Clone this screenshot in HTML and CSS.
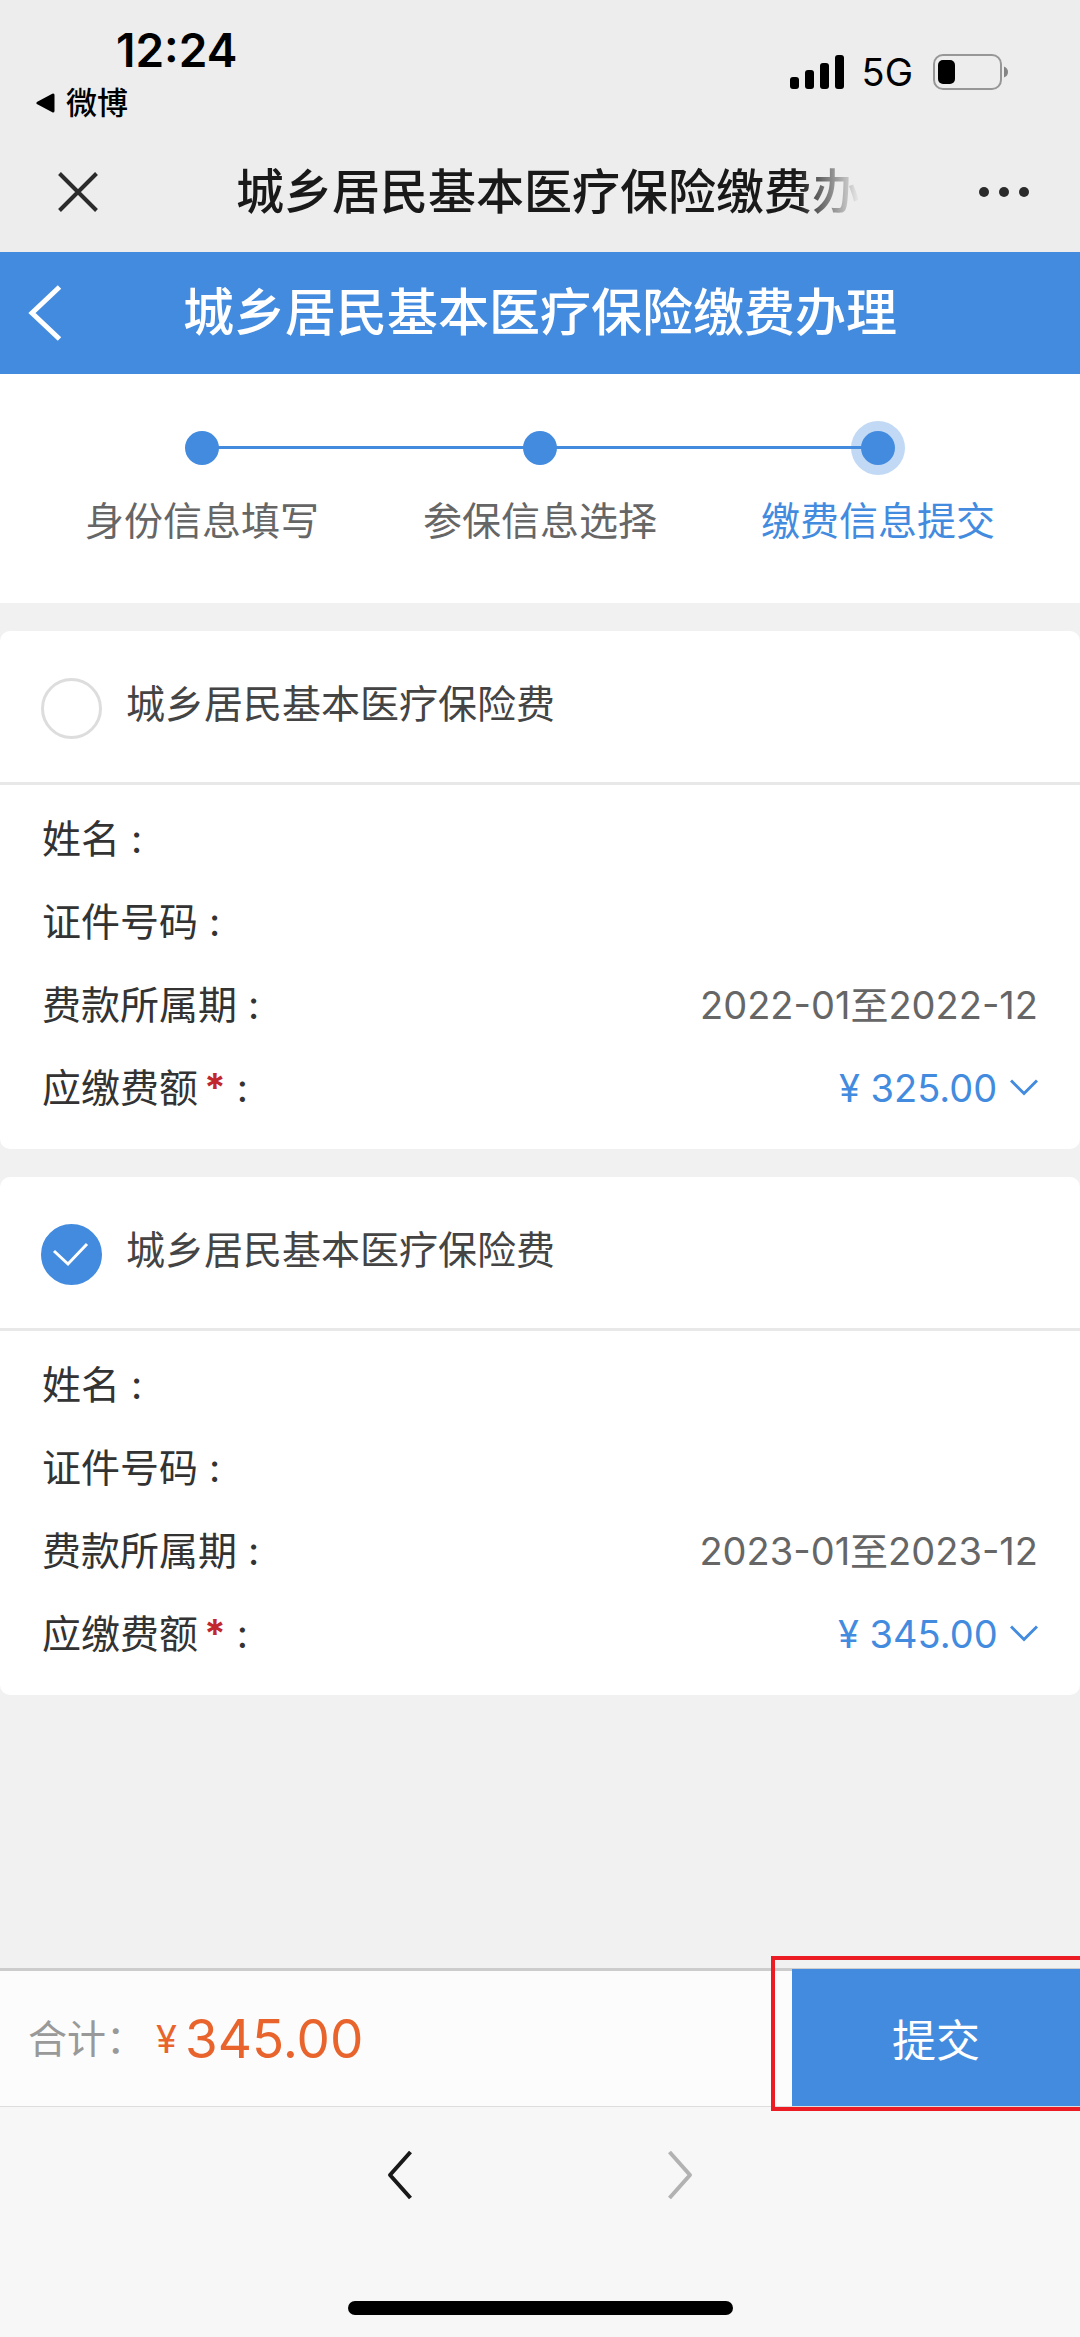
FILE: index.html
```html
<!DOCTYPE html>
<html lang="zh-CN">

<head>
    <meta charset="UTF-8">
    <meta name="viewport" content="width=device-width, initial-scale=1.0">
    <title>城乡居民基本医疗保险缴费办理</title>
    <link rel="stylesheet" href="styles.css">
</head>

<body>
    <div class="status-bar">
        <div class="status-left">
            <div class="time">12:24</div>
            <a class="back-app" href="#">
                <svg width="19" height="20" viewBox="0 0 19 20"><path d="M2 10L17 2V18Z" stroke="#000" stroke-width="3" stroke-linejoin="round"/></svg>
                <span>微博</span>
            </a>
        </div>
        <div class="status-right">
            <svg width="54" height="36" viewBox="0 0 54 36">
                <rect x="0" y="23" width="9" height="12" rx="3"/>
                <rect x="15" y="16" width="9" height="19" rx="3"/>
                <rect x="30" y="9" width="9" height="26" rx="3"/>
                <rect x="45" y="1" width="9" height="34" rx="3"/>
            </svg>
            <span class="network">5G</span>
            <svg width="76" height="36" viewBox="0 0 76 36">
                <rect x="1" y="1" width="67" height="34" rx="9" fill="none" stroke="#979797" stroke-width="2"/>
                <rect x="5" y="6" width="17" height="24" rx="5"/>
                <path d="M71 12.500Q75 14 75 18T71 23.500Z" fill="#858585"/>
            </svg>
        </div>
    </div>

    <div class="browser-bar">
        <button class="icon-btn" aria-label="关闭">
            <svg width="40" height="40" viewBox="0 0 40 40"><path d="M1.500 1.500L38.500 38.500M38.500 1.500L1.500 38.500" fill="none" stroke="#2b2b2b" stroke-width="4"/></svg>
        </button>
        <div class="browser-title">城乡居民基本医疗保险缴费办</div>
        <button class="icon-btn" aria-label="更多">
            <svg width="50" height="10" viewBox="0 0 50 10" fill="#2b2b2b"><circle cx="5" cy="5" r="5"/><circle cx="25" cy="5" r="5"/><circle cx="45" cy="5" r="5"/></svg>
        </button>
    </div>

    <header>
        <button class="icon-btn" aria-label="返回">
            <svg width="34" height="56" viewBox="0 0 34 56"><path d="M31.500 2L4 28L31.500 54" fill="none" stroke="#fff" stroke-width="5"/></svg>
        </button>
        <h1>城乡居民基本医疗保险缴费办理</h1>
    </header>

    <main>
        <ol class="steps">
            <li><span class="dot"></span>身份信息填写</li>
            <li><span class="dot"></span>参保信息选择</li>
            <li class="active"><span class="dot"></span>缴费信息提交</li>
        </ol>

        <section class="card">
            <label class="card-head">
                <span class="check">
                    <input type="radio" name="fee">
                    <svg width="61" height="61" viewBox="0 0 61 61"><path d="M13 27L27 40L46 20" fill="none" stroke="#fff" stroke-width="3"/></svg>
                </span>
                <span>城乡居民基本医疗保险费</span>
            </label>
            <dl>
                <div class="row"><dt>姓名 :</dt><dd></dd></div>
                <div class="row"><dt>证件号码 :</dt><dd></dd></div>
                <div class="row"><dt>费款所属期 :</dt><dd>2022-01至2022-12</dd></div>
                <div class="row">
                    <dt><label for="amount1">应缴费额<b>*</b> :</label></dt>
                    <dd class="amount">
                        <select id="amount1"><option>¥ 325.00</option></select>
                        <svg width="28" height="17" viewBox="0 0 28 17"><path d="M1 1.500L14 14.500L27 1.500" fill="none" stroke="#438bdf" stroke-width="3"/></svg>
                    </dd>
                </div>
            </dl>
        </section>

        <section class="card">
            <label class="card-head">
                <span class="check">
                    <input type="radio" name="fee" checked>
                    <svg width="61" height="61" viewBox="0 0 61 61"><path d="M13 27L27 40L46 20" fill="none" stroke="#fff" stroke-width="3"/></svg>
                </span>
                <span>城乡居民基本医疗保险费</span>
            </label>
            <dl>
                <div class="row"><dt>姓名 :</dt><dd></dd></div>
                <div class="row"><dt>证件号码 :</dt><dd></dd></div>
                <div class="row"><dt>费款所属期 :</dt><dd>2023-01至2023-12</dd></div>
                <div class="row">
                    <dt><label for="amount2">应缴费额<b>*</b> :</label></dt>
                    <dd class="amount">
                        <select id="amount2"><option>¥ 345.00</option></select>
                        <svg width="28" height="17" viewBox="0 0 28 17"><path d="M1 1.500L14 14.500L27 1.500" fill="none" stroke="#438bdf" stroke-width="3"/></svg>
                    </dd>
                </div>
            </dl>
        </section>
    </main>

    <div class="pay-bar">
        <div class="total">
            <span class="total-label">合计：</span>
            <span class="yen">¥</span>
            <span class="sum">345.00</span>
        </div>
        <div class="submit">
            <button>提交</button>
            <span class="highlight"></span>
        </div>
    </div>

    <footer>
        <nav>
            <button class="icon-btn" aria-label="后退">
                <svg width="26" height="50" viewBox="0 0 26 50"><path d="M23.500 2L3 25L23.500 48" fill="none" stroke="#191919" stroke-width="4" stroke-linejoin="round"/></svg>
            </button>
            <button class="icon-btn" aria-label="前进" disabled>
                <svg width="26" height="50" viewBox="0 0 26 50"><path d="M2.500 2L23 25L2.500 48" fill="none" stroke="#b2b2b2" stroke-width="4" stroke-linejoin="round"/></svg>
            </button>
        </nav>
        <div class="home-indicator"></div>
    </footer>
</body>

</html>
```

FILE: styles.css
```css
* {
    box-sizing: border-box;
}

body {
    margin: 0;
    min-height: 100vh;
    display: flex;
    flex-direction: column;
    font-family: Inter, 'Noto Sans CJK SC', sans-serif;
    font-size: 39px;
    line-height: 56px;
    color: #333;
    background: #f1f1f1;
}

button,
select {
    font-family: inherit;
    font-size: inherit;
    color: inherit;
    border: none;
    padding: 0;
    margin: 0;
    background: none;
}

svg {
    display: block;
    flex: none;
}

.icon-btn {
    display: flex;
    align-items: center;
}

/* phone status bar */
.status-bar {
    display: flex;
    justify-content: space-between;
    height: 131px;
    padding: 22px 71px 0 36px;
    background: #ededed;
    color: #000;
}

.time {
    padding-left: 80px;
    font-size: 46px;
    font-weight: 600;
}

.back-app {
    display: flex;
    align-items: center;
    gap: 11px;
    height: 50px;
    font-size: 31px;
    font-weight: 500;
    color: #000;
    text-decoration: none;
}

.status-right {
    display: flex;
    align-items: center;
    height: 99px;
}

.network {
    margin: 0 20px 0 18px;
    font-size: 38px;
}

.browser-bar {
    display: flex;
    align-items: center;
    justify-content: space-between;
    height: 121px;
    padding: 0 51px 0 58px;
    background: #ededed;
}

.browser-title {
    margin-left: 19px;
    white-space: nowrap;
    font-size: 48px;
    font-weight: 500;
    color: #191919;
    -webkit-mask-image: linear-gradient(to right, #000 90%, transparent);
    mask-image: linear-gradient(to right, #000 90%, transparent);
}

header {
    display: flex;
    align-items: center;
    height: 122px;
    padding: 0 28px;
    background: #438bdf;
    color: #fff;
}

header h1 {
    flex: 1;
    margin: 0 34px 0 0;
    font-size: 51px;
    font-weight: 500;
    text-align: center;
}

main {
    flex: 1;
}

/* progress steps */
.steps {
    display: flex;
    margin: 0 0 28px;
    padding: 57px 33px 54px;
    list-style: none;
    background: #fff;
    color: #666;
}

.steps li {
    position: relative;
    flex: 1;
    display: flex;
    flex-direction: column;
    align-items: center;
    gap: 28px;
}

.steps li + li::before {
    content: "";
    position: absolute;
    top: 15px;
    right: 50%;
    width: 100%;
    height: 3px;
    background: #438bdf;
}

.dot {
    position: relative;
    z-index: 1;
    width: 34px;
    height: 34px;
    border-radius: 50%;
    background: #438bdf;
}

.steps .active {
    color: #438bdf;
}

.active .dot {
    box-shadow: 0 0 0 10px rgba(67, 139, 223, 0.33);
}

/* fee cards */
.card {
    margin-bottom: 28px;
    border-radius: 10px;
    background: #fff;
}

.card-head {
    display: flex;
    gap: 24px;
    height: 154px;
    padding: 47px 41px 0;
    border-bottom: 3px solid #e8e8e8;
    line-height: 51px;
    color: #444;
}

.check {
    display: grid;
}

.check input,
.check svg {
    grid-area: 1 / 1;
}

.check input {
    appearance: none;
    width: 61px;
    height: 61px;
    margin: 0;
    border: 3px solid #ddd;
    border-radius: 50%;
}

.check input:checked {
    border-color: #438bdf;
    background: #438bdf;
}

.check svg {
    z-index: 1;
}

.card dl {
    margin: 0;
    padding: 12px 42px 20px;
}

.row {
    display: flex;
    align-items: center;
    justify-content: space-between;
    height: 83px;
}

.row b {
    margin-left: 6px;
    color: #c1272d;
}

.row dd {
    margin: 0;
    font-size: 38px;
    color: #666;
}

.row .amount {
    display: flex;
    align-items: center;
    gap: 12px;
    color: #438bdf;
}

.amount select {
    appearance: none;
}

/* total and submit */
.pay-bar {
    display: flex;
    height: 139px;
    border-top: 3px solid #ccc;
    border-bottom: 1px solid #ddd;
    background: #fcfcfc;
}

.total {
    flex: 1;
    display: flex;
    align-items: center;
    padding-left: 28px;
}

.total-label {
    color: #999;
}

.yen {
    margin: 0 8px 0 11px;
    font-size: 38px;
    color: #e8642c;
}

.sum {
    font-size: 53px;
    color: #e8642c;
}

.submit {
    position: relative;
    width: 288px;
    margin-top: -2px;
}

.submit button {
    width: 100%;
    height: 100%;
    font-size: 44px;
    background: #438bdf;
    color: #fff;
}

.highlight {
    position: absolute;
    top: -13px;
    right: 0;
    bottom: -5px;
    left: -21px;
    border: 4px solid #ec1c24;
    border-right: none;
    pointer-events: none;
}

footer {
    height: 230px;
    padding-top: 43px;
    background: #f7f7f7;
}

nav {
    display: flex;
    justify-content: center;
    gap: 254px;
}

.home-indicator {
    width: 385px;
    height: 14px;
    margin: 101px auto 0;
    border-radius: 7px;
    background: #000;
}
```
